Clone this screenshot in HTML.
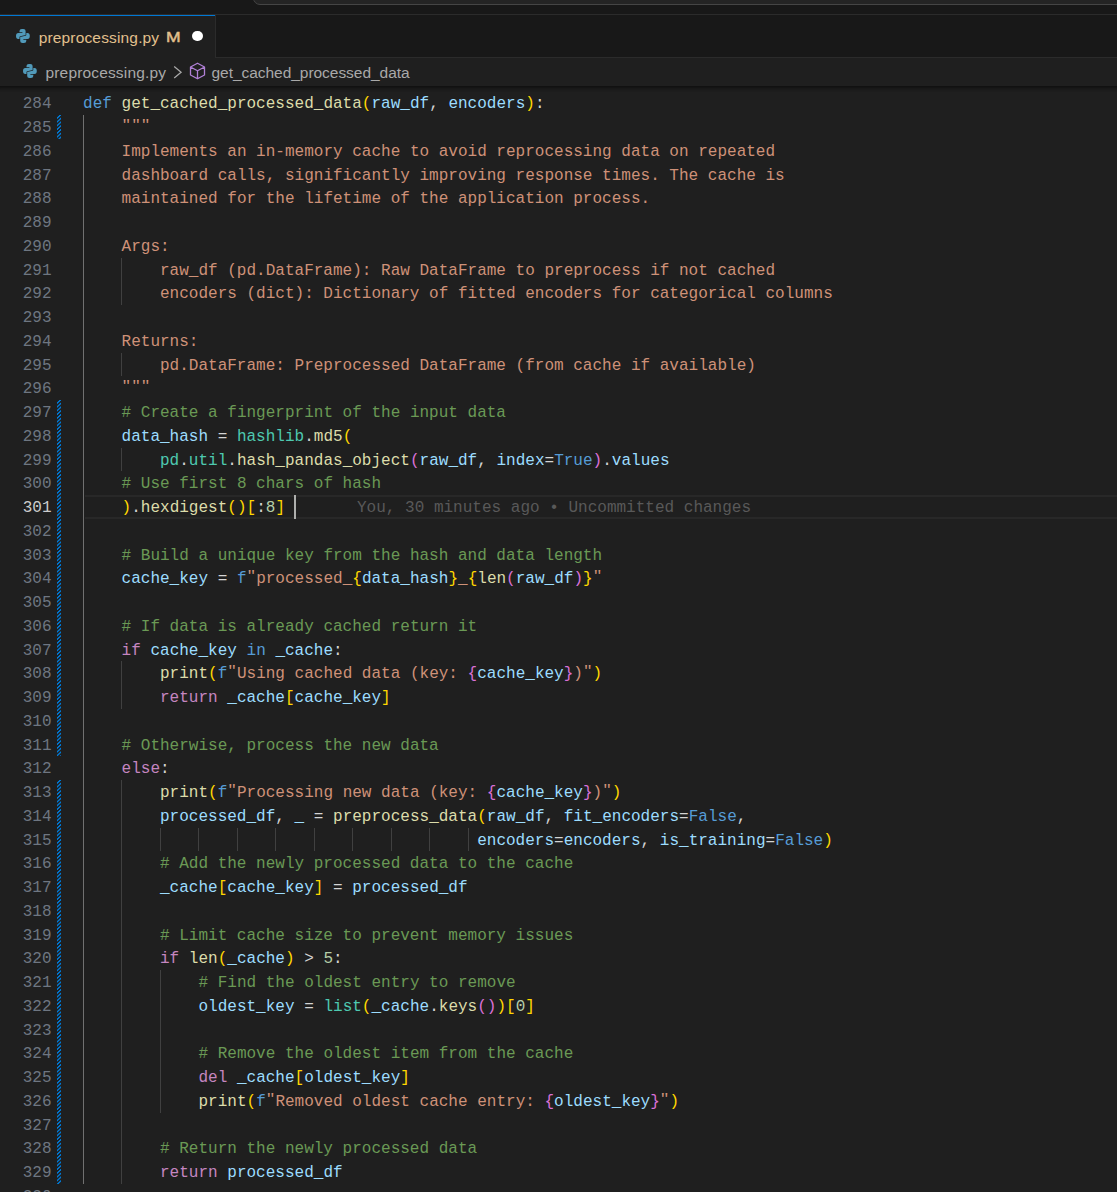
<!DOCTYPE html>
<html><head><meta charset="utf-8">
<style>
*{margin:0;padding:0;box-sizing:border-box}
html,body{width:1117px;height:1192px;overflow:hidden;background:#1f1f1f}
body{position:relative;font-family:"Liberation Sans",sans-serif}
#title{position:absolute;left:0;top:0;width:1117px;height:15px;background:#181818;border-bottom:1px solid #2b2b2b;overflow:hidden}
#cc{position:absolute;left:253px;top:-40px;width:1000px;height:45px;background:#242424;border:1.25px solid #454545;border-radius:7px}
#tabs{position:absolute;left:0;top:15px;width:1117px;height:43.75px;background:#181818}
#tabs .bb{position:absolute;left:215px;right:0;top:41.8px;height:1.2px;background:#2b2b2b}
#tab{position:absolute;left:0;top:0;width:216px;height:43.75px;background:#1f1f1f;border-right:1.25px solid #2b2b2b}
#tab .top{position:absolute;left:0;top:0;width:215px;height:1.2px;background:#0078d4}
.tabtxt{position:absolute;left:38.7px;top:15.2px;font-size:15.5px;letter-spacing:0.16px;color:#e2c08d;line-height:16px;white-space:pre}
.tabm{position:absolute;left:166.1px;top:13.9px;font-size:14.6px;color:#e2c08d;line-height:16px;font-weight:normal;-webkit-text-stroke:0.45px #e2c08d;transform:scaleX(1.2);transform-origin:0 0}
.dot{position:absolute;left:192px;top:15.9px;width:10.5px;height:10.3px;border-radius:50%;background:#ffffff}
.pyi{position:absolute}
#bc{position:absolute;left:0;top:58px;width:1117px;height:28.25px;background:#1f1f1f}
.bctxt{position:absolute;top:7.05px;font-size:15.5px;letter-spacing:0.16px;color:#a9a9a9;line-height:16px;white-space:pre}
#ed{position:absolute;left:0;top:86.25px;width:1117px;height:1106px;overflow:hidden}
#shadow{position:absolute;left:0;top:86.25px;width:1117px;height:6px;box-shadow:inset 0 6px 6px -6px #000}
.ln{position:absolute;left:0;width:51.5px;text-align:right;font-family:"Liberation Mono",monospace;font-size:16.036px;line-height:23.75px;height:23.75px;color:#6e7681;white-space:pre}
.ln.cur{color:#cccccc}
.code{position:absolute;left:83.1px;font-family:"Liberation Mono",monospace;font-size:16.036px;line-height:23.75px;height:23.75px;color:#d4d4d4;white-space:pre}
.kw{color:#569cd6}.ct{color:#c586c0}.fn{color:#dcdcaa}.v{color:#9cdcfe}.s{color:#ce9178}.c{color:#6a9955}.t{color:#4ec9b0}.n{color:#b5cea8}.q{display:inline-block;transform:translateY(-3.1px) scaleY(0.85);transform-origin:50% 30%}.b1{color:#ffd700}.b2{color:#da70d6}
.g{position:absolute;width:1px;background:#404040}
.g.ga{background:#707070}
.mod{position:absolute;left:57.1px;width:3.75px;background-image:linear-gradient(-45deg,#0078d4 25%,transparent 25%,transparent 50%,#0078d4 50%,#0078d4 75%,transparent 75%,transparent);background-repeat:repeat-y;background-size:3.75px 3.75px}
#curline{position:absolute;left:84.5px;right:0;top:495.15px;height:23.75px;border-top:2.5px solid #282828;border-bottom:2.5px solid #282828}
#cursor{position:absolute;left:294px;top:495.15px;width:2.2px;height:23.75px;background:#aeafad}
.blame{position:absolute;left:357px;top:497.15px;font-family:"Liberation Mono",monospace;font-size:16.036px;line-height:23.75px;color:#595959;white-space:pre}
</style></head><body>
<div id="title"><div id="cc"></div></div>
<div id="tabs">
  <div class="bb"></div>
  <div id="tab"><div class="top"></div>
    <svg class="pyi" style="left:15.9px;top:14.0px" width="13.8" height="14" viewBox="0 0 13.8 14"><path fill="#519aba" d="M3.5 2 Q3.5 0 5.8 0 H7.4 Q9.6 0 9.6 2 V6.1 L4.4 7.2 Q3.5 7.4 3.5 8.3 V9.9 H2.3 Q0 9.9 0 6.9 Q0 3.9 2.3 3.9 H6.4 V3.2 H3.5 Z"/><path fill="#519aba" transform="rotate(180 6.9 7)" d="M3.5 2 Q3.5 0 5.8 0 H7.4 Q9.6 0 9.6 2 V6.1 L4.4 7.2 Q3.5 7.4 3.5 8.3 V9.9 H2.3 Q0 9.9 0 6.9 Q0 3.9 2.3 3.9 H6.4 V3.2 H3.5 Z"/></svg>
    <div class="tabtxt">preprocessing.py</div>
    <div class="tabm">M</div>
    <div class="dot"></div>
  </div>
</div>
<div id="bc">
  <svg class="pyi" style="left:23.1px;top:5.9px" width="13.8" height="14" viewBox="0 0 13.8 14"><path fill="#519aba" d="M3.5 2 Q3.5 0 5.8 0 H7.4 Q9.6 0 9.6 2 V6.1 L4.4 7.2 Q3.5 7.4 3.5 8.3 V9.9 H2.3 Q0 9.9 0 6.9 Q0 3.9 2.3 3.9 H6.4 V3.2 H3.5 Z"/><path fill="#519aba" transform="rotate(180 6.9 7)" d="M3.5 2 Q3.5 0 5.8 0 H7.4 Q9.6 0 9.6 2 V6.1 L4.4 7.2 Q3.5 7.4 3.5 8.3 V9.9 H2.3 Q0 9.9 0 6.9 Q0 3.9 2.3 3.9 H6.4 V3.2 H3.5 Z"/></svg>
  <div class="bctxt" style="left:45.5px">preprocessing.py</div>
  <svg style="position:absolute;left:172px;top:7.75px" width="11" height="14" viewBox="0 0 11 14"><path d="M2.2 0.6 L9.1 6.35 L2.2 12.1" fill="none" stroke="#a9a9a9" stroke-width="1.25"/></svg>
  <svg style="position:absolute;left:189px;top:3.9px" width="17" height="18" viewBox="0 0 17 18"><path d="M8.5 1.2 L15.5 5 L15.5 13 L8.5 16.8 L1.5 13 L1.5 5 Z M1.5 5 L8.5 8.8 L15.5 5 M8.5 8.8 L8.5 16.8" fill="none" stroke="#b180d7" stroke-width="1.3" stroke-linejoin="round"/></svg>
  <div class="bctxt" style="left:211.5px;letter-spacing:-0.04px">get_cached_processed_data</div>
</div>
<div id="ed">
</div>
<div id="curline"></div>
<div class="g ga" style="left:83.00px;top:115.15px;height:1068.75px"></div>
<div class="g" style="left:121.00px;top:257.65px;height:47.50px"></div>
<div class="g" style="left:121.00px;top:352.65px;height:23.75px"></div>
<div class="g" style="left:121.00px;top:447.65px;height:23.75px"></div>
<div class="g" style="left:121.00px;top:661.40px;height:47.50px"></div>
<div class="g" style="left:121.00px;top:780.15px;height:403.75px"></div>
<div class="g" style="left:160.00px;top:827.65px;height:23.75px"></div>
<div class="g" style="left:198.00px;top:827.65px;height:23.75px"></div>
<div class="g" style="left:237.00px;top:827.65px;height:23.75px"></div>
<div class="g" style="left:275.00px;top:827.65px;height:23.75px"></div>
<div class="g" style="left:314.00px;top:827.65px;height:23.75px"></div>
<div class="g" style="left:352.00px;top:827.65px;height:23.75px"></div>
<div class="g" style="left:391.00px;top:827.65px;height:23.75px"></div>
<div class="g" style="left:429.00px;top:827.65px;height:23.75px"></div>
<div class="g" style="left:468.00px;top:827.65px;height:23.75px"></div>
<div class="g" style="left:160.00px;top:970.15px;height:142.50px"></div>
<div class="mod" style="top:115.15px;height:23.75px"></div>
<div class="mod" style="top:400.15px;height:356.25px"></div>
<div class="mod" style="top:780.15px;height:403.75px"></div>
<div class="ln" style="top:93.40px">284</div>
<div class="code" style="top:93.40px"><span class="kw">def</span> <span class="fn">get_cached_processed_data</span><span class="b1">(</span><span class="v">raw_df</span>, <span class="v">encoders</span><span class="b1">)</span>:</div>
<div class="ln" style="top:117.15px">285</div>
<div class="code" style="top:117.15px">    <span class="s"><span class="q">&quot;</span><span class="q">&quot;</span><span class="q">&quot;</span></span></div>
<div class="ln" style="top:140.90px">286</div>
<div class="code" style="top:140.90px">    <span class="s">Implements an in-memory cache to avoid reprocessing data on repeated</span></div>
<div class="ln" style="top:164.65px">287</div>
<div class="code" style="top:164.65px">    <span class="s">dashboard calls, significantly improving response times. The cache is</span></div>
<div class="ln" style="top:188.40px">288</div>
<div class="code" style="top:188.40px">    <span class="s">maintained for the lifetime of the application process.</span></div>
<div class="ln" style="top:212.15px">289</div>
<div class="ln" style="top:235.90px">290</div>
<div class="code" style="top:235.90px">    <span class="s">Args:</span></div>
<div class="ln" style="top:259.65px">291</div>
<div class="code" style="top:259.65px">        <span class="s">raw_df (pd.DataFrame): Raw DataFrame to preprocess if not cached</span></div>
<div class="ln" style="top:283.40px">292</div>
<div class="code" style="top:283.40px">        <span class="s">encoders (dict): Dictionary of fitted encoders for categorical columns</span></div>
<div class="ln" style="top:307.15px">293</div>
<div class="ln" style="top:330.90px">294</div>
<div class="code" style="top:330.90px">    <span class="s">Returns:</span></div>
<div class="ln" style="top:354.65px">295</div>
<div class="code" style="top:354.65px">        <span class="s">pd.DataFrame: Preprocessed DataFrame (from cache if available)</span></div>
<div class="ln" style="top:378.40px">296</div>
<div class="code" style="top:378.40px">    <span class="s"><span class="q">&quot;</span><span class="q">&quot;</span><span class="q">&quot;</span></span></div>
<div class="ln" style="top:402.15px">297</div>
<div class="code" style="top:402.15px">    <span class="c"># Create a fingerprint of the input data</span></div>
<div class="ln" style="top:425.90px">298</div>
<div class="code" style="top:425.90px">    <span class="v">data_hash</span> = <span class="t">hashlib</span>.<span class="fn">md5</span><span class="b1">(</span></div>
<div class="ln" style="top:449.65px">299</div>
<div class="code" style="top:449.65px">        <span class="t">pd</span>.<span class="t">util</span>.<span class="fn">hash_pandas_object</span><span class="b2">(</span><span class="v">raw_df</span>, <span class="v">index</span>=<span class="kw">True</span><span class="b2">)</span>.<span class="v">values</span></div>
<div class="ln" style="top:473.40px">300</div>
<div class="code" style="top:473.40px">    <span class="c"># Use first 8 chars of hash</span></div>
<div class="ln cur" style="top:497.15px">301</div>
<div class="code" style="top:497.15px">    <span class="b1">)</span>.<span class="fn">hexdigest</span><span class="b1">()</span><span class="b1">[</span>:<span class="n">8</span><span class="b1">]</span></div>
<div class="ln" style="top:520.90px">302</div>
<div class="ln" style="top:544.65px">303</div>
<div class="code" style="top:544.65px">    <span class="c"># Build a unique key from the hash and data length</span></div>
<div class="ln" style="top:568.40px">304</div>
<div class="code" style="top:568.40px">    <span class="v">cache_key</span> = <span class="kw">f</span><span class="s"><span class="q">&quot;</span>processed_</span><span class="b1">{</span><span class="v">data_hash</span><span class="b1">}</span><span class="s">_</span><span class="b1">{</span><span class="fn">len</span><span class="b2">(</span><span class="v">raw_df</span><span class="b2">)</span><span class="b1">}</span><span class="s"><span class="q">&quot;</span></span></div>
<div class="ln" style="top:592.15px">305</div>
<div class="ln" style="top:615.90px">306</div>
<div class="code" style="top:615.90px">    <span class="c"># If data is already cached return it</span></div>
<div class="ln" style="top:639.65px">307</div>
<div class="code" style="top:639.65px">    <span class="ct">if</span> <span class="v">cache_key</span> <span class="kw">in</span> <span class="v">_cache</span>:</div>
<div class="ln" style="top:663.40px">308</div>
<div class="code" style="top:663.40px">        <span class="fn">print</span><span class="b1">(</span><span class="kw">f</span><span class="s"><span class="q">&quot;</span>Using cached data (key: </span><span class="b2">{</span><span class="v">cache_key</span><span class="b2">}</span><span class="s">)<span class="q">&quot;</span></span><span class="b1">)</span></div>
<div class="ln" style="top:687.15px">309</div>
<div class="code" style="top:687.15px">        <span class="ct">return</span> <span class="v">_cache</span><span class="b1">[</span><span class="v">cache_key</span><span class="b1">]</span></div>
<div class="ln" style="top:710.90px">310</div>
<div class="ln" style="top:734.65px">311</div>
<div class="code" style="top:734.65px">    <span class="c"># Otherwise, process the new data</span></div>
<div class="ln" style="top:758.40px">312</div>
<div class="code" style="top:758.40px">    <span class="ct">else</span>:</div>
<div class="ln" style="top:782.15px">313</div>
<div class="code" style="top:782.15px">        <span class="fn">print</span><span class="b1">(</span><span class="kw">f</span><span class="s"><span class="q">&quot;</span>Processing new data (key: </span><span class="b2">{</span><span class="v">cache_key</span><span class="b2">}</span><span class="s">)<span class="q">&quot;</span></span><span class="b1">)</span></div>
<div class="ln" style="top:805.90px">314</div>
<div class="code" style="top:805.90px">        <span class="v">processed_df</span>, <span class="v">_</span> = <span class="fn">preprocess_data</span><span class="b1">(</span><span class="v">raw_df</span>, <span class="v">fit_encoders</span>=<span class="kw">False</span>,</div>
<div class="ln" style="top:829.65px">315</div>
<div class="code" style="top:829.65px">                                         <span class="v">encoders</span>=<span class="v">encoders</span>, <span class="v">is_training</span>=<span class="kw">False</span><span class="b1">)</span></div>
<div class="ln" style="top:853.40px">316</div>
<div class="code" style="top:853.40px">        <span class="c"># Add the newly processed data to the cache</span></div>
<div class="ln" style="top:877.15px">317</div>
<div class="code" style="top:877.15px">        <span class="v">_cache</span><span class="b1">[</span><span class="v">cache_key</span><span class="b1">]</span> = <span class="v">processed_df</span></div>
<div class="ln" style="top:900.90px">318</div>
<div class="ln" style="top:924.65px">319</div>
<div class="code" style="top:924.65px">        <span class="c"># Limit cache size to prevent memory issues</span></div>
<div class="ln" style="top:948.40px">320</div>
<div class="code" style="top:948.40px">        <span class="ct">if</span> <span class="fn">len</span><span class="b1">(</span><span class="v">_cache</span><span class="b1">)</span> &gt; <span class="n">5</span>:</div>
<div class="ln" style="top:972.15px">321</div>
<div class="code" style="top:972.15px">            <span class="c"># Find the oldest entry to remove</span></div>
<div class="ln" style="top:995.90px">322</div>
<div class="code" style="top:995.90px">            <span class="v">oldest_key</span> = <span class="t">list</span><span class="b1">(</span><span class="v">_cache</span>.<span class="fn">keys</span><span class="b2">()</span><span class="b1">)</span><span class="b1">[</span><span class="n">0</span><span class="b1">]</span></div>
<div class="ln" style="top:1019.65px">323</div>
<div class="ln" style="top:1043.40px">324</div>
<div class="code" style="top:1043.40px">            <span class="c"># Remove the oldest item from the cache</span></div>
<div class="ln" style="top:1067.15px">325</div>
<div class="code" style="top:1067.15px">            <span class="ct">del</span> <span class="v">_cache</span><span class="b1">[</span><span class="v">oldest_key</span><span class="b1">]</span></div>
<div class="ln" style="top:1090.90px">326</div>
<div class="code" style="top:1090.90px">            <span class="fn">print</span><span class="b1">(</span><span class="kw">f</span><span class="s"><span class="q">&quot;</span>Removed oldest cache entry: </span><span class="b2">{</span><span class="v">oldest_key</span><span class="b2">}</span><span class="s"><span class="q">&quot;</span></span><span class="b1">)</span></div>
<div class="ln" style="top:1114.65px">327</div>
<div class="ln" style="top:1138.40px">328</div>
<div class="code" style="top:1138.40px">        <span class="c"># Return the newly processed data</span></div>
<div class="ln" style="top:1162.15px">329</div>
<div class="code" style="top:1162.15px">        <span class="ct">return</span> <span class="v">processed_df</span></div>
<div class="ln" style="top:1185.90px">330</div>
<div id="cursor"></div>
<div class="blame">You, 30 minutes ago • Uncommitted changes</div>
<div id="shadow"></div>
</body></html>
